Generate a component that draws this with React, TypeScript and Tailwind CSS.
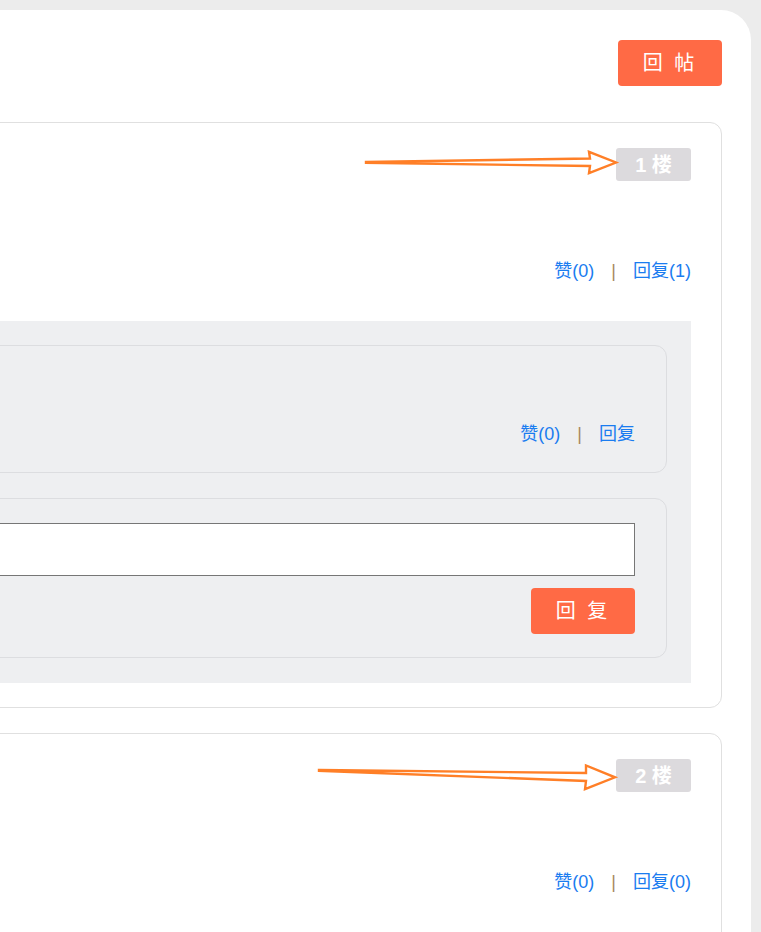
const fontStack = "font-['Liberation_Sans','Noto_Sans_CJK_SC',sans-serif]";

function OrangeButton({ label }: { label: string }) {
  return (
    <button className="w-[104px] h-[46px] rounded-[4px] bg-[#ff6a45] text-white text-[20px] tracking-[3px] leading-none flex items-center justify-center">
      {label}
    </button>
  );
}

function Actions({ reply }: { reply: string }) {
  return (
    <div className="flex justify-end text-[18px] leading-[24px] text-[#1a7cf0]">
      <span>赞(0)</span>
      <span className="mx-[17px] text-[#a8875f]">|</span>
      <span>{reply}</span>
    </div>
  );
}

function Arrow({ points, width, height, className }: { points: string; width: number; height: number; className: string }) {
  return (
    <svg width={width} height={height} viewBox={`0 0 ${width} ${height}`} className={className}>
      <polygon points={points} fill="none" stroke="#ff7f27" strokeWidth="2.4" strokeLinejoin="miter" />
    </svg>
  );
}

function FloorBadge({ n }: { n: number }) {
  return (
    <div className="flex justify-end">
      <div className="w-[75px] h-[33px] rounded-[3px] bg-[#dcdadd] text-white font-bold text-[20px] flex items-center justify-center">
        {n} 楼
      </div>
    </div>
  );
}

export default function App() {
  return (
    <div className={`min-h-screen bg-[#ececec] pt-[10px] overflow-hidden ${fontStack}`}>
      <div className="bg-white rounded-[30px] ml-[-260px] mr-[10px] pt-[30px] pr-[29px] pl-[29px] pb-[40px]">
        <div className="flex justify-end">
          <OrangeButton label="回 帖" />
        </div>

        <div className="mt-[36px] flex flex-col gap-[25px]">
          {/* floor 1 */}
          <div className="relative border border-[#e0e0e0] rounded-[12px] pt-[25px] pr-[30px] pb-[24px]">
            <Arrow
              width={256}
              height={26}
              className="absolute top-[27px] right-[101px]"
              points="2,12 226,8.5 225,1.8 252,12.5 225,23.2 226,16 2,12.8"
            />
            <FloorBadge n={1} />
            <div className="mt-[78px]">
              <Actions reply="回复(1)" />
            </div>
            <div className="mt-[38px] bg-[#eeeff1] pt-[24px] pr-[24px] pb-[25px] flex flex-col gap-[25px]">
              <div className="h-[128px] border border-[#dcdde0] rounded-[12px] pr-[31px] pb-[26px] flex flex-col justify-end">
                <Actions reply="回复" />
              </div>
              <div className="border border-[#dcdde0] rounded-[12px] pt-[24px] pr-[31px] pb-[23px]">
                <textarea className="block w-full h-[53px] bg-white border border-[#767676] resize-none outline-none" />
                <div className="mt-[12px] flex justify-end">
                  <OrangeButton label="回 复" />
                </div>
              </div>
            </div>
          </div>

          {/* floor 2 */}
          <div className="relative border border-[#e0e0e0] rounded-[12px] pt-[25px] pr-[30px] pb-[24px]">
            <Arrow
              width={302}
              height={29}
              className="absolute top-[29px] right-[102px]"
              points="2,7 269,10 269,2.5 298,14.3 268,26.2 269,18 2,7.8"
            />
            <FloorBadge n={2} />
            <div className="mt-[78px]">
              <Actions reply="回复(0)" />
            </div>
            <div className="mt-[38px] h-[60px] border-t border-[#e2e2e2]" />
          </div>
        </div>
      </div>
    </div>
  );
}
